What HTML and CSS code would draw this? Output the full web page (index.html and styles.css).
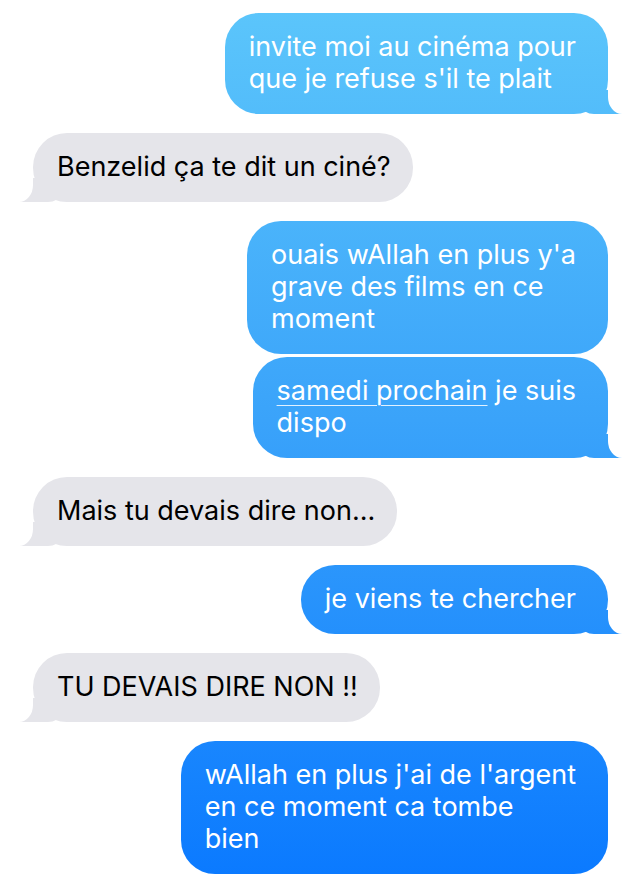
FILE: index.html
```html
<!DOCTYPE html>
<html lang="fr">
<head>
  <meta charset="UTF-8" />
  <meta name="viewport" content="width=device-width, initial-scale=1" />
  <title>Messages</title>
  <link rel="stylesheet" href="styles.css">
</head>
<body>
  <main class="thread">
    <div class="msg sent tail">invite moi au cinéma pour<br>que je refuse s'il te plait</div>

    <div class="msg recv tail">Benzelid ça te dit un ciné?</div>

    <div class="msg sent">ouais wAllah en plus y'a<br>grave des films en ce<br>moment</div>
    <div class="msg sent tail follow"><span class="link">samedi prochain</span> je suis<br>dispo</div>

    <div class="msg recv tail">Mais tu devais dire non...</div>

    <div class="msg sent tail">je viens te chercher</div>

    <div class="msg recv tail">TU DEVAIS DIRE NON !!</div>

    <div class="msg sent">wAllah en plus j'ai de l'argent<br>en ce moment ca tombe<br>bien</div>
  </main>
</body>
</html>
```

FILE: styles.css
```css
html,
body {
  margin: 0;
  background: #fff;
  overflow: hidden;
}

body {
  font-family: Inter, "Noto Sans", "Liberation Sans", sans-serif;
  font-size: 27px;
  line-height: 32px;
}

.thread {
  display: flex;
  flex-direction: column;
  padding-top: 13px;
}

.msg {
  position: relative;
  max-width: 400px;
  padding: 18px 0 19px;
  border-radius: 34px;
  margin-top: 19px;
  white-space: nowrap;
}

.msg:first-child {
  margin-top: 0;
}

.msg.follow {
  margin-top: 3px;
}

/* sent: blue, gradient pinned to the screen like iOS */
.sent {
  align-self: flex-end;
  margin-right: 31px;
  padding-left: 24px;
  padding-right: 32px;
  color: #fff;
  background: linear-gradient(180deg, #5cc6fb 0px, #3aa3fa 420px, #0b7aff 875px) fixed;
}

.recv {
  align-self: flex-start;
  margin-left: 33px;
  padding-left: 24px;
  padding-right: 22px;
  color: #000;
  background: #e5e5ea;
}

.link {
  text-decoration: underline;
  text-decoration-thickness: 1px;
  text-underline-offset: 5px;
  text-decoration-color: rgba(255, 255, 255, 0.85);
}

/* bubble tails */
.tail::before,
.tail::after {
  content: "";
  position: absolute;
  bottom: 0;
  height: 24px;
}

.sent.tail::before {
  z-index: 0;
  right: -14px;
  width: 40px;
  background: linear-gradient(180deg, #5cc6fb 0px, #3aa3fa 420px, #0b7aff 875px) fixed;
  border-bottom-left-radius: 12px 8px;
}

.sent.tail::after {
  z-index: 1;
  right: -30px;
  width: 30px;
  background: #fff;
  border-bottom-left-radius: 14px 17px;
}

.recv.tail::before {
  z-index: 0;
  left: -13px;
  width: 40px;
  background: #e5e5ea;
  border-bottom-right-radius: 12px 8px;
}

.recv.tail::after {
  z-index: 1;
  left: -30px;
  width: 30px;
  background: #fff;
  border-bottom-right-radius: 14px 17px;
}
```
